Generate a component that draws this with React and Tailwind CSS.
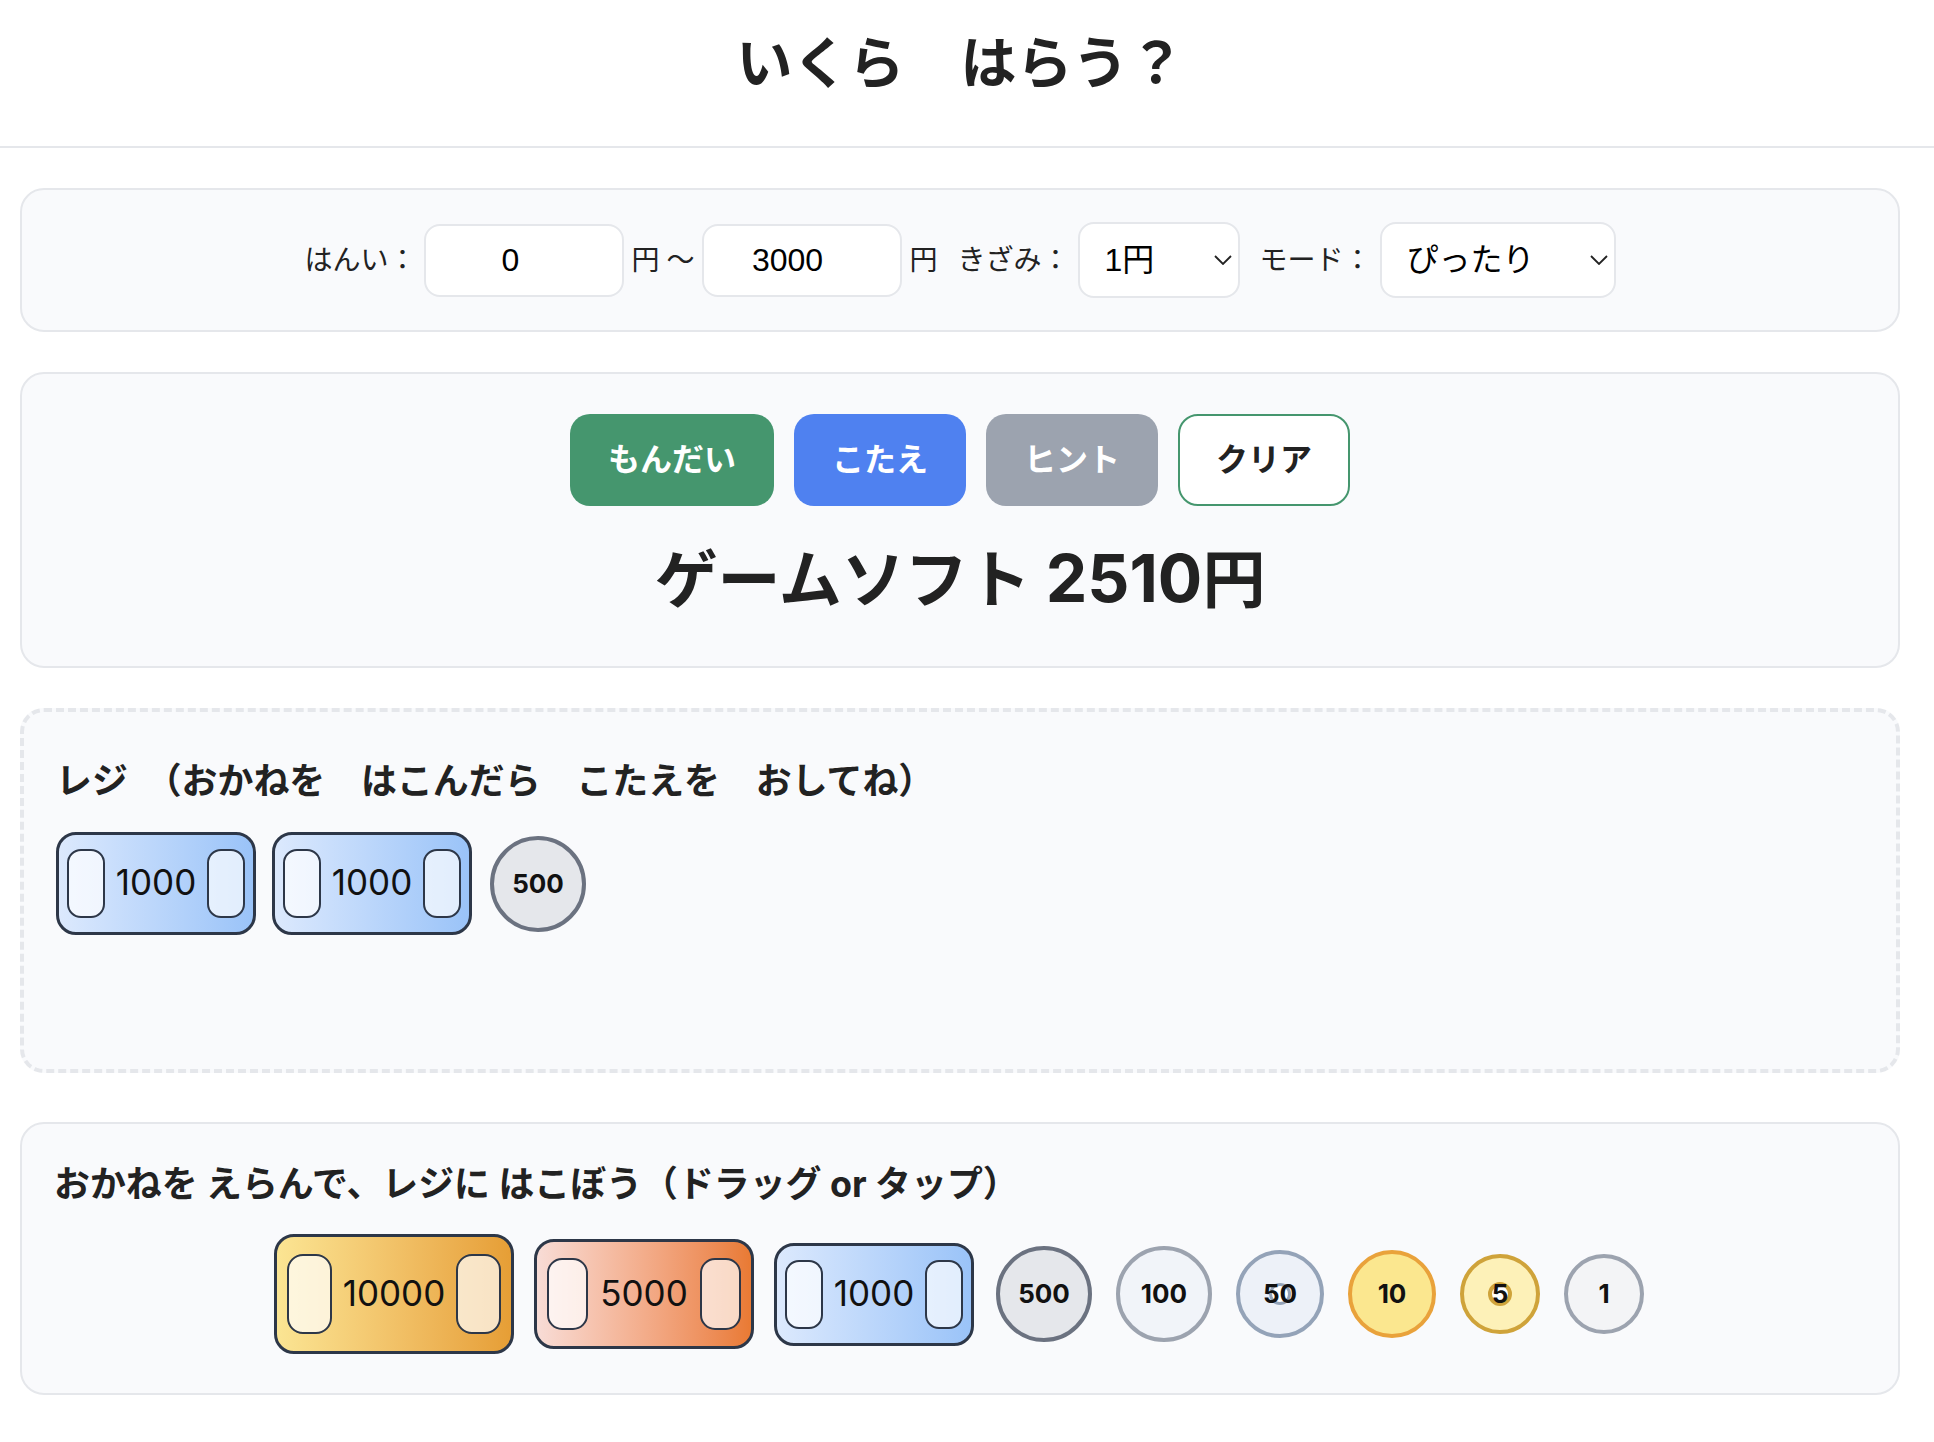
import React from "react";

function Bill({ value, cls }) {
  const size = {
    10000: { box: "w-[240px] h-[120px] px-[10px]", win: "w-[45px] h-[80px] rounded-[16px]" },
    5000: { box: "w-[220px] h-[110px] px-[10px]", win: "w-[41px] h-[72px] rounded-[15px]" },
    1000: { box: "w-[200px] h-[103px] px-[8px]", win: "w-[38px] h-[69px] rounded-[14px]" },
  }[value];
  return (
    <div className={`${size.box} ${cls} flex items-center justify-between shrink-0 rounded-[20px] border-[3px] border-[#2d3748] bg-gradient-to-r text-[35px] leading-none text-[#111]`}>
      <div className={`${size.win} border-2 border-[#2d3748] bg-white/70`} />
      <span className="pb-[2px]">{value}</span>
      <div className={`${size.win} border-2 border-[#2d3748] bg-white/70`} />
    </div>
  );
}
const Yen10000 = () => <Bill value={10000} cls="from-[#fbe593] to-[#e69e35]" />;
const Yen5000 = () => <Bill value={5000} cls="from-[#f8dcd6] to-[#e97a33]" />;
const Yen1000 = () => <Bill value={1000} cls="from-[#dce9fd] to-[#9ac3f8]" />;

function Coin({ value, cls, hole }) {
  return (
    <div className={`${cls} m-[2px] relative flex items-center justify-center shrink-0 rounded-full border-[4px] text-[26px] font-bold leading-none text-[#111]`}>
      {hole && <div className={`${hole} absolute rounded-full bg-white`} />}
      <span className="relative">{value}</span>
    </div>
  );
}
const Coin500 = () => <Coin value={500} cls="w-[96px] h-[96px] bg-[#e5e7eb] border-[#6b7280]" />;

function Select({ widthCls, children }) {
  return (
    <div className={`${widthCls} relative h-[76px] shrink-0`}>
      <select className="h-full w-full appearance-none rounded-[16px] border-2 border-[#e5e7eb] bg-white pl-[25px] text-[32px] text-black outline-none font-['Liberation_Sans','Noto_Sans_CJK_JP',sans-serif]">
        {children}
      </select>
      <svg className="pointer-events-none absolute right-[8px] top-[33px] h-[10px] w-[18px]" viewBox="0 0 18 10" fill="none" stroke="#222" strokeWidth="1.8">
        <path d="M1 1 L9 9 L17 1" />
      </svg>
    </div>
  );
}

const fieldCls = "h-[73px] w-[200px] shrink-0 rounded-[16px] border-2 border-[#e5e7eb] bg-white pr-[13px] text-center text-[32px] text-black outline-none font-['Liberation_Sans',sans-serif]";
const panel = "rounded-[24px] border-2 border-[#e5e7eb] bg-[#f9fafc]";
const btn = "h-[92px] rounded-[20px] text-[32px] font-bold";

export default function App() {
  return (
    <div className="min-h-[1442px] bg-white text-[#222] font-['Inter','Noto_Sans_CJK_JP',sans-serif]">
      <header className="flex h-[148px] items-center justify-center border-b-2 border-[#e5e7eb] pb-[20px] pr-[13px]">
        <h1 className="text-[56px] font-bold leading-none">いくら　はらう？</h1>
      </header>
      <main className="flex flex-col pl-[20px] pr-[34px] pt-[40px]">
        <section className={`${panel} flex h-[144px] items-center justify-center`}>
          <span className="mr-[8px] text-[28px]">はんい：</span>
          <input type="number" readOnly value="0" className={fieldCls} />
          <span className="ml-[7px] mr-[7px] text-[28px]">円<span className="ml-[7px]">～</span></span>
          <input type="number" readOnly value="3000" className={fieldCls} />
          <span className="ml-[8px] mr-[20px] text-[28px]">円</span>
          <span className="mr-[8px] text-[28px]">きざみ：</span>
          <Select widthCls="w-[162px]">
            <option value="1">1円</option>
          </Select>
          <span className="ml-[20px] mr-[8px] text-[28px]">モード：</span>
          <Select widthCls="w-[236px]">
            <option value="a">ぴったり</option>
          </Select>
        </section>

        <section className={`${panel} mt-[40px] flex h-[296px] flex-col items-center pt-[40px]`}>
          <div className="flex gap-[20px]">
            <button className={`${btn} w-[204px] bg-[#45966e] text-white`}>もんだい</button>
            <button className={`${btn} w-[172px] bg-[#4f81f0] text-white`}>こたえ</button>
            <button className={`${btn} w-[172px] bg-[#9ca3af] text-white`}>ヒント</button>
            <button className={`${btn} w-[172px] border-2 border-[#45966e] bg-white text-[#222]`}>クリア</button>
          </div>
          <h2 className="mt-[24px] text-[63px] font-bold leading-[96px]">ゲームソフト <span className="text-[66px]">2510</span>円</h2>
        </section>

        <section className="mt-[40px] h-[365px] rounded-[24px] border-[4px] border-dashed border-[#e5e7eb] bg-[#f9fafc] px-[32px] pt-[43px]">
          <h3 className="text-[35.9px] font-bold leading-[52px]">レジ　（おかねを　はこんだら　こたえを　おしてね）</h3>
          <div className="mt-[25px] flex items-center gap-[16px]">
            <Yen1000 />
            <Yen1000 />
            <Coin500 />
          </div>
        </section>

        <section className={`${panel} mt-[49px] h-[273px] px-[32px] pt-[34px]`}>
          <h3 className="text-[35.9px] font-bold leading-[52px]">おかねを えらんで、レジに はこぼう（ドラッグ or タップ）</h3>
          <div className="mt-[24px] flex items-center justify-center gap-[20px]">
            <Yen10000 />
            <Yen5000 />
            <Yen1000 />
            <Coin500 />
            <Coin value={100} cls="w-[96px] h-[96px] bg-[#f1f4f9] border-[#9ca3af]" />
            <Coin value={50} cls="w-[88px] h-[88px] bg-[#edf1f8] border-[#94a3b8]" hole="w-[22px] h-[22px] border-[3px] border-[#94a3b8]" />
            <Coin value={10} cls="w-[88px] h-[88px] bg-[#fbe78f] border-[#e9a23b]" />
            <Coin value={5} cls="w-[80px] h-[80px] bg-[#fdf1b8] border-[#cfa33a]" hole="w-[24px] h-[24px] border-[4px] border-[#cfa33a]" />
            <Coin value={1} cls="w-[80px] h-[80px] bg-[#f3f4f6] border-[#9ca3af]" />
          </div>
        </section>
      </main>
    </div>
  );
}
